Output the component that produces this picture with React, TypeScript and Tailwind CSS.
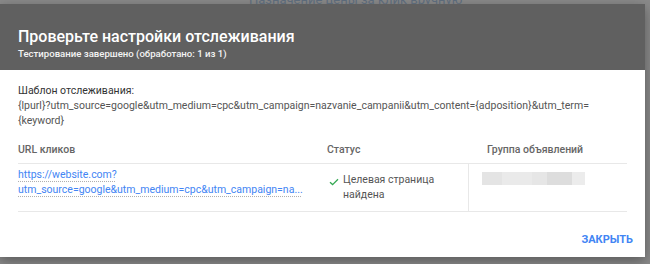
import React from 'react';

const font = { fontFamily: 'Roboto, "Noto Sans", Arial, sans-serif' };

export default function App() {
  return (
    <div className="relative h-[264px] w-[650px] overflow-hidden bg-[#8a8a8a]" style={font}>
      {/* page behind the overlay, only a sliver shows */}
      <div className="h-[4px] overflow-hidden">
        <div className="-mt-[7px] pl-[249px] text-[13px] leading-[14px] text-[#5c6a7a]">
          Назначение цены за клик вручную
        </div>
      </div>

      <div className="flex h-[253px] w-[645px] flex-col bg-white shadow-[0_4px_12px_rgba(0,0,0,0.35)]">
        <header className="h-[66px] bg-[#606060] px-[18px] pt-[23px]">
          <h1 className="text-[16px] font-medium leading-[20px] text-white">
            Проверьте настройки отслеживания
          </h1>
          <p className="mt-[1px] text-[9.6px] font-medium leading-[12px] text-[#f4f4f4]">
            Тестирование завершено (обработано: 1 из 1)
          </p>
        </header>

        <div className="flex-1 px-[18px] pt-[13px]">
          <div className="text-[10.5px] leading-[15px] text-[#333]">Шаблон отслеживания:</div>
          <div className="w-[600px] text-[10.5px] leading-[15px] text-[#555]">
            {'{lpurl}?utm_source=google&utm_medium=cpc&utm_campaign=nazvanie_campanii&utm_content={adposition}&utm_term='}
            <br />
            {'{keyword}'}
          </div>

          <div className="mt-[14px] w-[609px]">
            <div className="flex h-[22px] items-start border-b border-[#e8e8e8] text-[10.5px] font-medium leading-[15px] text-[#666]">
              <div className="w-[309px]">URL кликов</div>
              <div className="w-[142px]">Статус</div>
              <div className="pl-[18px]">Группа объявлений</div>
            </div>
            <div className="flex h-[48px] border-b border-[#e8e8e8] text-[10.5px] leading-[15px]">
              <div className="w-[309px] pt-[3px]">
                <a className="text-[#4285f4] underline decoration-dotted decoration-[#b0b0b0] underline-offset-[3px]">
                  https://website.com?
                  <br />
                  utm_source=google&amp;utm_medium=cpc&amp;utm_campaign=na...
                </a>
              </div>
              <div className="flex w-[142px] items-start border-r border-[#e8e8e8] pt-[8px]">
                <svg width="10" height="8" viewBox="0 0 10 8" className="ml-[2px] mr-[4px] mt-[6px] shrink-0">
                  <path d="M1 4.2 L3.6 6.6 L9 1.2" fill="none" stroke="#34a853" strokeWidth="1.3" />
                </svg>
                <span className="text-[#555]">
                  Целевая страница
                  <br />
                  найдена
                </span>
              </div>
              <div className="pl-[13px] pt-[8px]">
                <div className="flex h-[13px] w-[103px]">
                  <div className="w-[20px] bg-[#e4e4e4]" />
                  <div className="w-[30px] bg-[#eaeaea]" />
                  <div className="w-[15px] bg-[#e6e6e6]" />
                  <div className="w-[25px] bg-[#dddddd]" />
                  <div className="w-[13px] bg-[#ececec]" />
                </div>
              </div>
            </div>
          </div>
        </div>

        <div className="flex justify-end px-[12px] pb-[10px]">
          <button className="text-[11px] font-bold leading-[15px] text-[#4285f4]">ЗАКРЫТЬ</button>
        </div>
      </div>
    </div>
  );
}
